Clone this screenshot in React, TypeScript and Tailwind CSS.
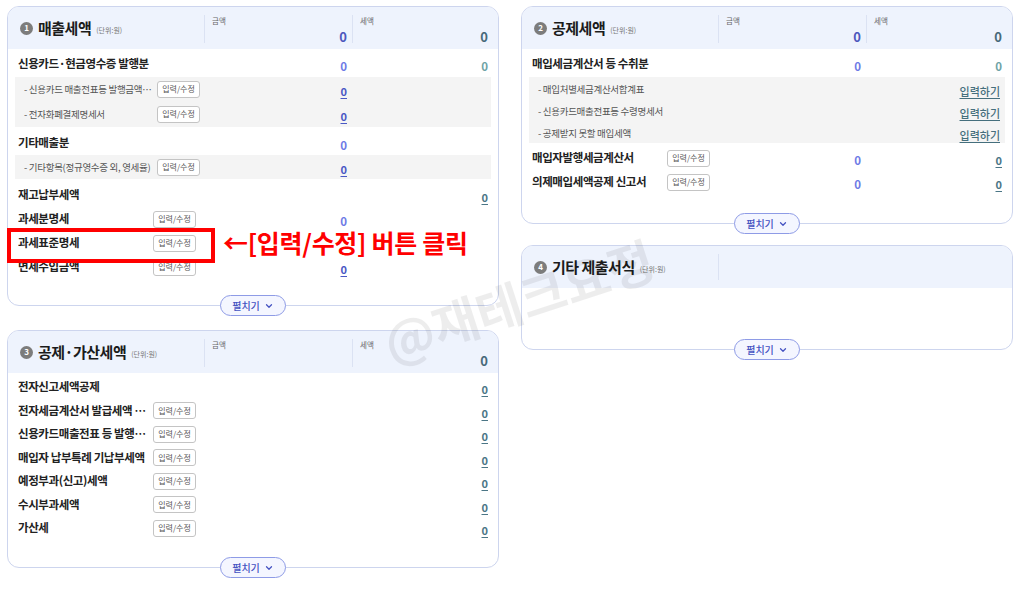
import { ChevronDown } from "lucide-react";

type Val = { v: string; kind: "plain" | "link" };

type RowData = {
  label: string;
  btn?: boolean;
  amount?: Val;
  tax?: Val;
  input?: boolean;
};

// Value cell, right aligned inside its column
function Amount({ val, col }: { val?: Val; col: "amount" | "tax" }) {
  if (!val) return null;
  if (val.kind === "link") {
    return (
      <span
        className={
          col === "amount"
            ? "text-[11px] font-semibold text-[#4a58c4] underline underline-offset-2"
            : "text-[11px] font-semibold text-[#4b7686] underline underline-offset-2"
        }
      >
        {val.v}
      </span>
    );
  }
  return (
    <span
      className={
        col === "amount"
          ? "text-[11.5px] font-bold text-[#6e7ae6]"
          : "text-[11.5px] font-semibold text-[#6fa3a6]"
      }
    >
      {val.v}
    </span>
  );
}

function EditButton() {
  return (
    <span className="inline-flex h-[17px] w-[43px] items-center justify-center rounded-[3px] border border-[#c4c4c4] bg-white text-[8px] text-[#555]">
      입력/수정
    </span>
  );
}

function PanelHeader({
  no,
  title,
  amount,
  tax,
  empty,
}: {
  no: number;
  title: string;
  amount?: string;
  tax?: string;
  empty?: boolean;
}) {
  return (
    <div className="grid h-[42px] grid-cols-[196px_148px_1fr] rounded-t-[11px] bg-[#eef3fd]">
      <div className="flex items-center gap-[5px] pl-[12px]">
        <span className="flex h-[13px] w-[13px] items-center justify-center rounded-full bg-[#7c7c7c] text-[8px] font-bold text-white">
          {no}
        </span>
        <span className="text-[15px] font-bold tracking-[-0.5px] text-[#1b1b1b]">
          {title}
        </span>
        <span className="mt-[4px] text-[7px] text-[#777]">(단위:원)</span>
      </div>
      {empty ? (
        <div className="col-span-2 my-[8px] border-l border-[#dbe2f3]" />
      ) : (
        <>
          <div className="mt-[8px] mb-[6px] flex flex-col border-l border-[#dbe2f3] pl-[7px] pr-[5px]">
            <span className="text-[7.5px] text-[#666]">금액</span>
            <span className="mt-auto self-end text-[13px] leading-none font-bold text-[#4d57bd]">
              {amount}
            </span>
          </div>
          <div className="mt-[8px] mb-[6px] flex flex-col border-l border-[#dbe2f3] pl-[7px] pr-[10px]">
            <span className="text-[7.5px] text-[#666]">세액</span>
            <span className="mt-auto self-end text-[13px] leading-none font-bold text-[#48697a]">
              {tax}
            </span>
          </div>
        </>
      )}
    </div>
  );
}

function MainRow({ row, h = "h-6" }: { row: RowData; h?: string }) {
  return (
    <div className={`grid grid-cols-[196px_148px_1fr] items-center ${h}`}>
      <div className="flex items-center pl-[10px]">
        <span className="w-[135px] shrink-0 overflow-hidden text-[11.5px] font-bold tracking-[-0.4px] whitespace-nowrap text-[#222]">
          {row.label}
        </span>
        {row.btn && <EditButton />}
      </div>
      <div className="pr-[5px] text-right">
        <Amount val={row.amount} col="amount" />
      </div>
      <div className="pr-[10px] text-right">
        <Amount val={row.tax} col="tax" />
      </div>
    </div>
  );
}

function SubRow({ row, h }: { row: RowData; h: string }) {
  return (
    <div className={`grid grid-cols-[189px_148px_1fr] items-center pb-[4px] ${h}`}>
      <div className="flex items-center pl-[9px]">
        <span className="w-[133px] shrink-0 overflow-hidden text-[9.5px] tracking-[-0.3px] whitespace-nowrap text-[#555]">
          - {row.label}
        </span>
        {row.btn && <EditButton />}
      </div>
      <div className="pr-[5px] text-right">
        <Amount val={row.amount} col="amount" />
      </div>
      <div className="pr-[5px] text-right">
        {row.input ? (
          <span className="text-[11px] font-medium text-[#456f7d] underline underline-offset-2">
            입력하기
          </span>
        ) : (
          <Amount val={row.tax} col="tax" />
        )}
      </div>
    </div>
  );
}

function Panel({
  height,
  children,
}: {
  height: string;
  children: React.ReactNode;
}) {
  return (
    <div
      className={`relative w-[492px] rounded-xl border border-[#cdd5ee] bg-white ${height}`}
    >
      {children}
      <div className="absolute bottom-[-11px] left-1/2 flex h-[21px] w-[66px] -translate-x-1/2 items-center justify-center gap-[4px] rounded-full border-[1.5px] border-[#8e9be6] bg-[#f4f6ff]">
        <span className="text-[10px] font-medium text-[#4553c2]">펼치기</span>
        <ChevronDown className="h-[10px] w-[10px] text-[#4553c2]" strokeWidth={3} />
      </div>
    </div>
  );
}

const zero: Val = { v: "0", kind: "plain" };
const zeroLink: Val = { v: "0", kind: "link" };

const deductionRows: RowData[] = [
  { label: "전자신고세액공제", tax: zeroLink },
  { label: "전자세금계산서 발급세액 ⋯", btn: true, tax: zeroLink },
  { label: "신용카드매출전표 등 발행⋯", btn: true, tax: zeroLink },
  { label: "매입자 납부특례 기납부세액", btn: true, tax: zeroLink },
  { label: "예정부과(신고)세액", btn: true, tax: zeroLink },
  { label: "수시부과세액", btn: true, tax: zeroLink },
  { label: "가산세", btn: true, tax: zeroLink },
];

export default function App() {
  return (
    <div className="relative h-[589px] w-[1024px] overflow-hidden bg-white font-['Noto_Sans_CJK_KR','Noto_Sans',sans-serif]">
      <div className="flex gap-[22px] pt-[6px] pl-[7px]">
        {/* left column */}
        <div className="flex flex-col gap-[24px]">
          <Panel height="h-[300px]">
            <PanelHeader no={1} title="매출세액" amount="0" tax="0" />
            <div className="pt-[3px]">
              <MainRow
                row={{ label: "신용카드·현금영수증 발행분", amount: zero, tax: zero }}
              />
              <div className="mx-[7px] mt-[1px] bg-[#f4f4f4]">
                <SubRow
                  h="h-[25px]"
                  row={{ label: "신용카드 매출전표등 발행금액⋯", btn: true, amount: zeroLink }}
                />
                <SubRow
                  h="h-[25px]"
                  row={{ label: "전자화폐결제명세서", btn: true, amount: zeroLink }}
                />
              </div>
              <div className="mt-[4px]">
                <MainRow row={{ label: "기타매출분", amount: zero }} />
              </div>
              <div className="mx-[7px] bg-[#f4f4f4]">
                <SubRow
                  h="h-[24px]"
                  row={{ label: "기타항목(정규영수증 외, 영세율)", btn: true, amount: zeroLink }}
                />
              </div>
              <div className="mt-[4px]">
                <MainRow row={{ label: "재고납부세액", tax: zeroLink }} />
                <MainRow row={{ label: "과세분명세", btn: true, amount: zero }} />
                <MainRow row={{ label: "과세표준명세", btn: true }} />
                <MainRow row={{ label: "면세수입금액", btn: true, amount: zeroLink }} />
              </div>
            </div>
          </Panel>

          <Panel height="h-[238px]">
            <PanelHeader no={3} title="공제·가산세액" tax="0" />
            <div className="pt-[2px]">
              {deductionRows.map((r) => (
                <MainRow key={r.label} row={r} h="h-[23.5px]" />
              ))}
            </div>
          </Panel>
        </div>

        {/* right column */}
        <div className="flex flex-col gap-[21px]">
          <Panel height="h-[218px]">
            <PanelHeader no={2} title="공제세액" amount="0" tax="0" />
            <div className="pt-[3px]">
              <MainRow
                row={{ label: "매입세금계산서 등 수취분", amount: zero, tax: zero }}
              />
              <div className="mx-[7px] mt-[1px] bg-[#f4f4f4]">
                <SubRow h="h-[22px]" row={{ label: "매입처별세금계산서합계표", input: true }} />
                <SubRow h="h-[22px]" row={{ label: "신용카드매출전표등 수령명세서", input: true }} />
                <SubRow h="h-[22px]" row={{ label: "공제받지 못할 매입세액", input: true }} />
              </div>
              <div className="mt-[3px]">
                <MainRow
                  row={{ label: "매입자발행세금계산서", btn: true, amount: zero, tax: zeroLink }}
                />
                <MainRow
                  row={{ label: "의제매입세액공제 신고서", btn: true, amount: zero, tax: zeroLink }}
                />
              </div>
            </div>
          </Panel>

          <Panel height="h-[105px]">
            <PanelHeader no={4} title="기타 제출서식" empty />
          </Panel>
        </div>
      </div>

      {/* annotation overlay */}
      <div className="absolute top-[228px] left-[7px] h-[35px] w-[208px] border-[4px] border-[#ff0000]" />
      <div className="absolute top-[224px] left-[223px] text-[25px] font-bold tracking-[-0.3px] whitespace-nowrap text-[#ff0000]">
        ←[입력/수정] 버튼 클릭
      </div>

      {/* watermark */}
      <div className="pointer-events-none absolute top-[262px] left-[378px] -rotate-[18deg] text-[50px] font-bold whitespace-nowrap text-[#000]/[0.07]">
        @재테크요정
      </div>
    </div>
  );
}
